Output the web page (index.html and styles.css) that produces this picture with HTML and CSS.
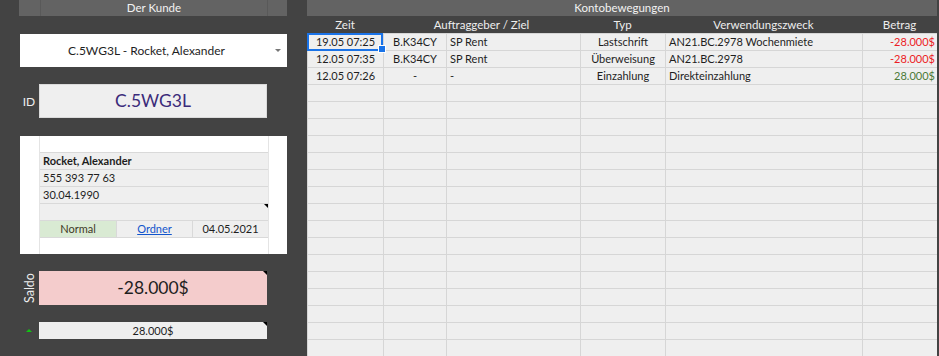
FILE: index.html
```html
<!DOCTYPE html>
<html lang="de">
<head>
  <meta charset="UTF-8">
  <title>Kunde / Kontobewegungen</title>
  <link rel="stylesheet" href="styles.css">
</head>
<body>
  <div class="screen">
    <section class="customer">
      <div class="band">
        <span class="band-edge"></span>
        <span class="band-title">Der Kunde</span>
        <span class="band-edge"></span>
      </div>

      <div class="picker">
        <span class="picker-text">C.5WG3L - Rocket, Alexander</span>
        <span class="caret"></span>
      </div>

      <div class="field id-field">
        <span class="field-label">ID</span>
        <div class="id-box">C.5WG3L</div>
      </div>

      <div class="card">
        <div class="card-body">
          <div class="card-row blank first"></div>
          <div class="card-row cell bold">Rocket, Alexander</div>
          <div class="card-row cell">555 393 77 63</div>
          <div class="card-row cell">30.04.1990</div>
          <div class="card-row cell note"></div>
          <div class="card-row status">
            <span class="status-normal">Normal</span>
            <span><a href="#">Ordner</a></span>
            <span>04.05.2021</span>
          </div>
          <div class="card-row blank last"></div>
        </div>
      </div>

      <div class="field saldo-field">
        <span class="field-label vertical">Saldo</span>
        <div class="saldo-box note">-28.000$</div>
      </div>

      <div class="field small-field">
        <span class="field-label"><span class="up"></span></span>
        <div class="small-box note">28.000$</div>
      </div>
    </section>

    <section class="ledger">
      <div class="band ledger-band">Kontobewegungen</div>

      <div class="sheet">
        <div class="hd">Zeit</div>
        <div class="hd span2">Auftraggeber / Ziel</div>
        <div class="hd">Typ</div>
        <div class="hd">Verwendungszweck</div>
        <div class="hd">Betrag</div>

        <div class="c center selected">19.05 07:25</div>
        <div class="c center">B.K34CY</div>
        <div class="c">SP Rent</div>
        <div class="c center">Lastschrift</div>
        <div class="c">AN21.BC.2978 Wochenmiete</div>
        <div class="c right minus">-28.000$</div>

        <div class="c center">12.05 07:35</div>
        <div class="c center">B.K34CY</div>
        <div class="c">SP Rent</div>
        <div class="c center">Überweisung</div>
        <div class="c">AN21.BC.2978</div>
        <div class="c right minus">-28.000$</div>

        <div class="c center">12.05 07:26</div>
        <div class="c center">-</div>
        <div class="c">-</div>
        <div class="c center">Einzahlung</div>
        <div class="c">Direkteinzahlung</div>
        <div class="c right plus">28.000$</div>
      </div>

      <!-- empty rows of the sheet -->
      <div class="filler">
        <span></span><span></span><span></span><span></span><span></span><span></span>
      </div>
    </section>
  </div>
</body>
</html>
```

FILE: styles.css
```css
* {
  box-sizing: border-box;
}

body {
  margin: 0;
  background-color: #434343;
  font-family: "Lato", "Liberation Sans", sans-serif;
  font-size: 11px;
  color: #1e1e1e;
}

.screen {
  display: flex;
  width: 939px;
  height: 356px;
  overflow: hidden;
}

/* ---------- header bands ---------- */

.band {
  height: 16px;
  line-height: 16px;
  background-color: #636363;
  color: #f2f2f2;
  font-size: 11.5px;
  text-align: center;
}

.customer .band {
  display: grid;
  grid-template-columns: 21px 228px 19px;
}

.band-title {
  border-left: 1px solid #595959;
  border-right: 1px solid #595959;
}

/* ---------- left panel ---------- */

.customer {
  width: 268px;
  margin-left: 19px;
}

.picker {
  position: relative;
  margin: 18px 0 0 1px;
  height: 33px;
  background-color: #fff;
  display: flex;
  align-items: center;
  justify-content: center;
  padding-right: 14px;
  font-size: 12px;
  color: #1e1e1e;
}

.caret {
  position: absolute;
  right: 6px;
  top: 15px;
  border-top: 3px solid #777;
  border-left: 3px solid transparent;
  border-right: 3px solid transparent;
}

.field {
  display: flex;
  align-items: center;
  margin-top: 17px;
}

.field-label {
  width: 20px;
  color: #eee;
  font-size: 12px;
  text-align: center;
  display: flex;
  justify-content: center;
}

.field-label.vertical {
  writing-mode: vertical-rl;
  transform: rotate(180deg);
  width: 20px;
  font-size: 12.5px;
}

.id-box {
  width: 228px;
  height: 34px;
  line-height: 32px;
  background-color: #efefef;
  border: 1px solid #dadada;
  text-align: center;
  font-size: 17.5px;
  color: #3b2b7a;
}

.card {
  margin: 18px 0 0 1px;
  background-color: #fff;
  padding: 0 18px 0 19px;
}

.card-body {
  border-left: 1px solid #e4e4e4;
  border-right: 1px solid #e4e4e4;
}

.card-row {
  height: 17px;
  line-height: 16px;
  border-top: 1px solid #d9d9d9;
}

.card-row.first {
  height: 16px;
  border-top: none;
}

.card-row.cell {
  background-color: #efefef;
  padding-left: 3px;
}

.card-row.bold {
  font-weight: bold;
}

.note {
  position: relative;
}

.note::after {
  content: "";
  position: absolute;
  top: 0;
  right: 0;
  border-top: 4px solid #000;
  border-left: 4px solid transparent;
}

.status {
  display: grid;
  grid-template-columns: 76px 76px 76px;
  background-color: #efefef;
  text-align: center;
}

.status span + span {
  border-left: 1px solid #d9d9d9;
}

.status-normal {
  background-color: #d9ead3;
  color: #3f3826;
}

.status a {
  color: #1155cc;
}

.saldo-field .field-label {
  height: 34px;
  align-items: center;
}

.saldo-box {
  width: 228px;
  height: 34px;
  line-height: 34px;
  background-color: #f4cccc;
  text-align: center;
  font-size: 17.5px;
  color: #1e1e1e;
}

.small-box {
  width: 228px;
  height: 17px;
  line-height: 17px;
  background-color: #efefef;
  text-align: center;
}

.up {
  border-bottom: 3px solid #12c312;
  border-left: 3px solid transparent;
  border-right: 3px solid transparent;
}

/* ---------- right panel ---------- */

.ledger {
  width: 630px;
  margin-left: 20px;
}

.sheet,
.filler {
  display: grid;
  grid-template-columns: 76px 63px 134px 85px 197px 75px;
}

.hd {
  height: 17px;
  line-height: 17px;
  text-align: center;
  color: #eee;
  font-size: 11.5px;
}

.hd.span2 {
  grid-column: span 2;
}

.c {
  height: 17px;
  line-height: 16px;
  padding: 0 3px;
  background-color: #efefef;
  border-top: 1px solid #d6d6d6;
  border-left: 1px solid #d6d6d6;
  white-space: nowrap;
  overflow: hidden;
}

.c.center {
  text-align: center;
}

.c.right {
  text-align: right;
  padding-right: 2px;
}

.minus {
  color: #ec1c24;
}

.plus {
  color: #4b7a37;
}

.selected {
  position: relative;
  overflow: visible;
}

.selected::before {
  content: "";
  position: absolute;
  top: -1px;
  left: -1px;
  right: 0;
  bottom: -1px;
  border: 2px solid #1a73e8;
}

.selected::after {
  content: "";
  position: absolute;
  right: -3px;
  bottom: -3px;
  width: 6px;
  height: 6px;
  background-color: #1a73e8;
  border: 1px solid #fff;
}

.filler {
  height: 272px;
}

.filler span {
  border-left: 1px solid #d6d6d6;
  background: repeating-linear-gradient(to bottom, #d6d6d6 0 1px, #efefef 1px 17px);
}
```
